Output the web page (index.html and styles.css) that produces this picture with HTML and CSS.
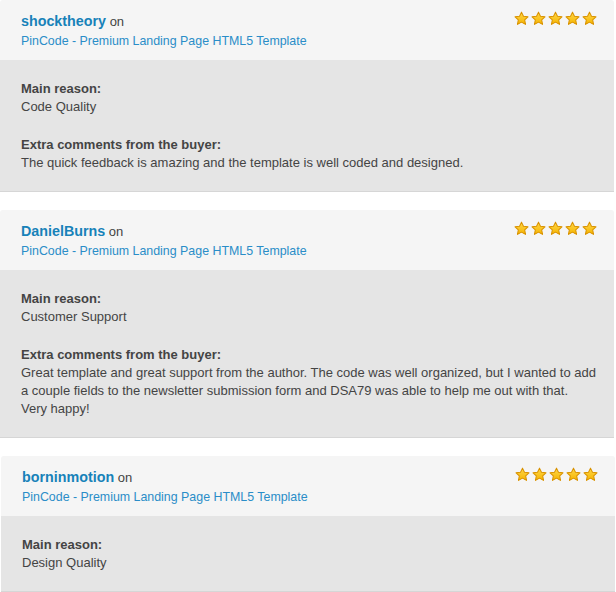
FILE: index.html
```html
<!DOCTYPE html>
<html>
<head>
<meta charset="utf-8">
<link rel="stylesheet" href="styles.css">
</head>
<body>
<svg width="0" height="0" class="defs">
  <defs>
    <linearGradient id="g" x1="0" y1="0" x2="0" y2="1">
      <stop offset="0" stop-color="#ffd84a"/>
      <stop offset="1" stop-color="#f5b400"/>
    </linearGradient>
    <symbol id="star" viewBox="0 0 16 16">
      <path d="M8 1.2 L10.1 5.6 L14.9 6.2 L11.4 9.5 L12.3 14.3 L8 11.9 L3.7 14.3 L4.6 9.5 L1.1 6.2 L5.9 5.6 Z" fill="url(#g)" stroke="#d99200" stroke-width="1.1" stroke-linejoin="round"/>
    </symbol>
  </defs>
</svg>

<div class="review">
  <div class="head">
    <div class="who">
      <div class="line1"><a class="user">shocktheory</a> <span class="on">on</span></div>
      <a class="item">PinCode - Premium Landing Page HTML5 Template</a>
    </div>
    <div class="stars">
      <svg><use href="#star"/></svg><svg><use href="#star"/></svg><svg><use href="#star"/></svg><svg><use href="#star"/></svg><svg><use href="#star"/></svg>
    </div>
  </div>
  <div class="body">
    <p><b>Main reason:</b><br>Code Quality</p>
    <p><b>Extra comments from the buyer:</b><br>The quick feedback is amazing and the template is well coded and designed.</p>
  </div>
</div>

<div class="review">
  <div class="head">
    <div class="who">
      <div class="line1"><a class="user">DanielBurns</a> <span class="on">on</span></div>
      <a class="item">PinCode - Premium Landing Page HTML5 Template</a>
    </div>
    <div class="stars">
      <svg><use href="#star"/></svg><svg><use href="#star"/></svg><svg><use href="#star"/></svg><svg><use href="#star"/></svg><svg><use href="#star"/></svg>
    </div>
  </div>
  <div class="body">
    <p><b>Main reason:</b><br>Customer Support</p>
    <p><b>Extra comments from the buyer:</b><br>Great template and great support from the author. The code was well organized, but I wanted to add<br>a couple fields to the newsletter submission form and DSA79 was able to help me out with that.<br>Very happy!</p>
  </div>
</div>

<div class="review third">
  <div class="head">
    <div class="who">
      <div class="line1"><a class="user">borninmotion</a> <span class="on">on</span></div>
      <a class="item">PinCode - Premium Landing Page HTML5 Template</a>
    </div>
    <div class="stars">
      <svg><use href="#star"/></svg><svg><use href="#star"/></svg><svg><use href="#star"/></svg><svg><use href="#star"/></svg><svg><use href="#star"/></svg>
    </div>
  </div>
  <div class="body">
    <p><b>Main reason:</b><br>Design Quality</p>
  </div>
</div>
</body>
</html>
```

FILE: styles.css
```css
html, body {
  margin: 0;
  padding: 0;
  background: #ffffff;
}
body {
  font-family: "Liberation Sans", Arial, sans-serif;
  color: #444444;
  font-size: 13px;
}
.defs {
  position: absolute;
  width: 0;
  height: 0;
}
.review {
  width: 614px;
  margin: 0 0 18px 0;
  border-radius: 3px 3px 0 0;
  overflow: hidden;
}
.review.third {
  margin-left: 1px;
}
.head {
  background: #f5f5f5;
  height: 60px;
  box-sizing: border-box;
  padding: 10px 17px 10px 21px;
  display: flex;
  justify-content: space-between;
  align-items: flex-start;
}
.line1 {
  height: 22px;
  line-height: 22px;
}
.user {
  color: #1782b9;
  font-weight: bold;
  font-size: 14.3px;
}
.on {
  color: #444444;
  font-size: 13px;
}
.item {
  display: block;
  color: #2a8dc8;
  font-size: 12.4px;
  line-height: 18px;
}
.stars {
  display: flex;
  gap: 2px;
  padding-top: 1px;
}
.stars svg {
  width: 15px;
  height: 15px;
}
.body {
  background: #e5e5e5;
  padding: 20px 8px 19px 21px;
  border-bottom: 1px solid #d6d6d6;
}
.body p {
  margin: 0 0 20px 0;
  line-height: 18px;
}
.body p:last-child {
  margin-bottom: 0;
}
.body b {
  font-weight: bold;
}
```
